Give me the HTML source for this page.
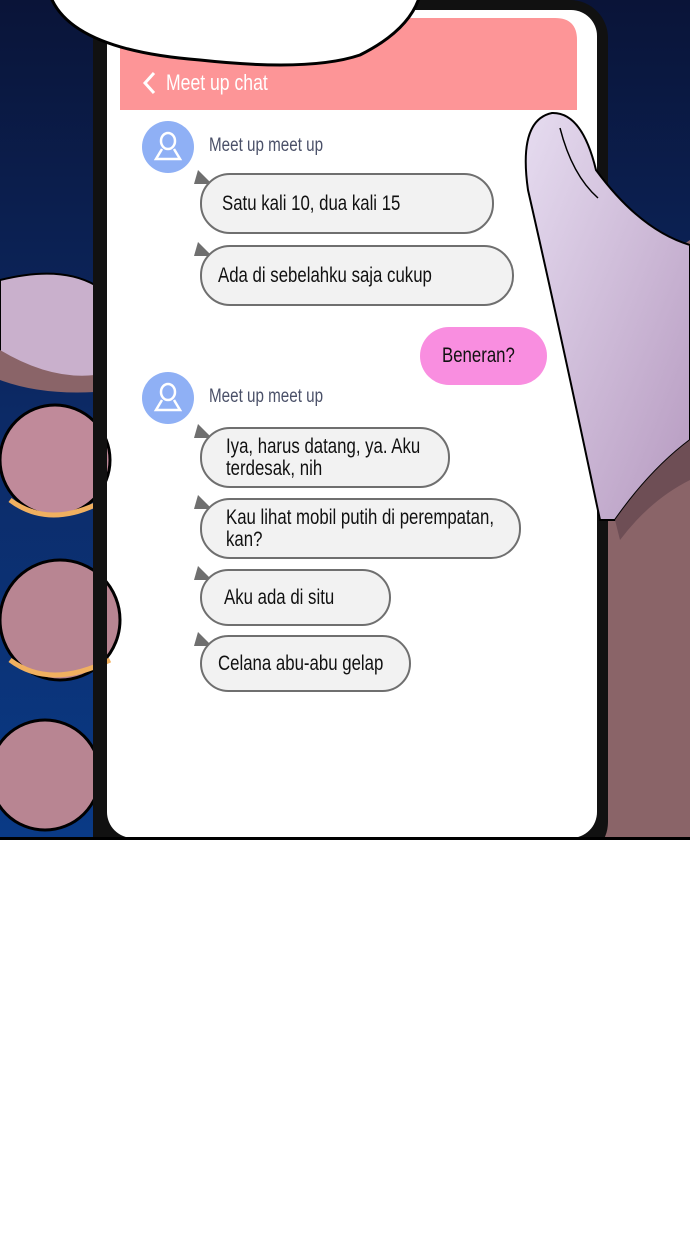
<!DOCTYPE html>
<html><head><meta charset="utf-8"><style>
body{margin:0;width:690px;height:1240px;background:#fff;position:relative;overflow:hidden;font-family:"Liberation Sans",sans-serif}
.b{position:absolute;background:#f2f2f2;border:2px solid #6f6f6f;border-radius:30px;box-sizing:border-box;font-size:21px;color:#111;line-height:22px;display:flex;align-items:center;padding-left:20px;white-space:nowrap}
.b span,.n span,.h span{display:inline-block;transform:scaleX(0.8);transform-origin:left center}
.t{position:absolute;width:0;height:0;border-left:4px solid transparent;border-right:14px solid transparent;border-bottom:14px solid #6f6f6f}
.n{position:absolute;font-size:19px;color:#4a5068;white-space:nowrap}
</style></head><body>
<svg width="690" height="840" style="position:absolute;left:0;top:0">
<defs><linearGradient id="bg" x1="0" y1="0" x2="0" y2="1"><stop offset="0" stop-color="#0a1438"/><stop offset="0.5" stop-color="#0c2a66"/><stop offset="1" stop-color="#0a3a86"/></linearGradient>
<linearGradient id="th" x1="0" y1="0" x2="1" y2="1"><stop offset="0" stop-color="#e6dcf0"/><stop offset="1" stop-color="#b69ac0"/></linearGradient></defs>
<rect width="690" height="838" fill="url(#bg)"/>
<path d="M600 300 L690 240 L690 838 L600 838 Z" fill="#8a6468"/>
<rect x="93" y="0" width="515" height="860" rx="38" fill="#111"/>
<rect x="107" y="10" width="490" height="828" rx="26" fill="#fff"/>
<path d="M120 40 Q120 18 142 18 L555 18 Q577 18 577 40 L577 110 L120 110 Z" fill="#fd9597"/>
<path d="M528 190 Q518 120 552 113 Q582 112 596 170 Q640 230 690 245 L690 440 Q650 470 615 520 L600 520 Q560 330 528 190 Z" fill="url(#th)" stroke="#000" stroke-width="2"/>
<path d="M560 128 Q572 175 598 198" stroke="#000" stroke-width="1.5" fill="none"/>
<path d="M615 520 Q650 470 690 440 L690 480 Q650 500 620 540 Z" fill="#6e4e55"/>
<path d="M0 280 Q60 265 95 285 L95 385 Q40 390 0 370 Z" fill="#c9b0cc" stroke="#000" stroke-width="2"/>
<path d="M0 350 Q50 380 95 375 L95 392 Q40 395 0 380 Z" fill="#8a6468"/>
<circle cx="55" cy="460" r="55" fill="#c08a9a" stroke="#000" stroke-width="3"/>
<path d="M10 500 Q50 530 105 500" stroke="#f0b060" stroke-width="5" fill="none"/>
<circle cx="60" cy="620" r="60" fill="#b88592" stroke="#000" stroke-width="3"/>
<path d="M10 660 Q50 690 110 660" stroke="#f0b060" stroke-width="5" fill="none"/>
<circle cx="45" cy="775" r="55" fill="#b88592" stroke="#000" stroke-width="3"/>
<rect x="93" y="250" width="14" height="588" fill="#111"/>
<rect x="0" y="837" width="690" height="3" fill="#000"/>
<path d="M50 -5 Q70 50 200 60 Q310 72 360 55 Q410 30 420 -5 Z" fill="#fff" stroke="#000" stroke-width="3"/>
<circle cx="168" cy="147" r="26" fill="#8fb0f5"/>
<circle cx="168" cy="398" r="26" fill="#8fb0f5"/>
<g fill="none" stroke="#fff" stroke-width="2.5">
<ellipse cx="168" cy="141" rx="7" ry="8"/><path d="M162 149 L156 159 L180 159 L174 149"/>
<ellipse cx="168" cy="392" rx="7" ry="8"/><path d="M162 400 L156 410 L180 410 L174 400"/>
</g>
</svg>
<svg style="position:absolute;left:140px;top:70px" width="20" height="26"><path d="M14 3 L5 13 L14 23" stroke="#fff" stroke-width="3" fill="none"/></svg>
<div class="h" style="position:absolute;left:166px;top:70px;color:#fff;font-size:22px;white-space:nowrap"><span>Meet up chat</span></div>

<div class="n" style="left:209px;top:135px"><span>Meet up meet up</span></div>
<div class="n" style="left:209px;top:386px"><span>Meet up meet up</span></div>

<div class="t" style="left:194px;top:170px"></div><div class="b" style="left:200px;top:173px;width:294px;height:61px"><span>Satu kali 10, dua kali 15</span></div>
<div class="t" style="left:194px;top:242px"></div><div class="b" style="left:200px;top:245px;width:314px;height:61px;padding-left:16px"><span>Ada di sebelahku saja cukup</span></div>
<div class="b" style="left:420px;top:327px;width:127px;height:58px;background:#f98ee0;border:none;padding-left:22px"><span>Beneran?</span></div>
<div class="t" style="left:194px;top:424px"></div><div class="b" style="left:200px;top:427px;width:250px;height:61px;padding-left:24px"><span>Iya, harus datang, ya. Aku<br>terdesak, nih</span></div>
<div class="t" style="left:194px;top:495px"></div><div class="b" style="left:200px;top:498px;width:321px;height:61px;padding-left:24px"><span>Kau lihat mobil putih di perempatan,<br>kan?</span></div>
<div class="t" style="left:194px;top:566px"></div><div class="b" style="left:200px;top:569px;width:191px;height:57px;padding-left:22px"><span>Aku ada di situ</span></div>
<div class="t" style="left:194px;top:632px"></div><div class="b" style="left:200px;top:635px;width:211px;height:57px;padding-left:16px"><span>Celana abu-abu gelap</span></div>
</body></html>
